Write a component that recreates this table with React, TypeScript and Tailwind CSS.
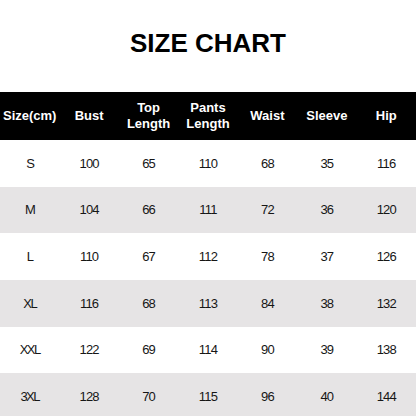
const headers = ['Size(cm)', 'Bust', 'Top\nLength', 'Pants\nLength', 'Waist', 'Sleeve', 'Hip'];

const rows = [
  ['S', '100', '65', '110', '68', '35', '116'],
  ['M', '104', '66', '111', '72', '36', '120'],
  ['L', '110', '67', '112', '78', '37', '126'],
  ['XL', '116', '68', '113', '84', '38', '132'],
  ['XXL', '122', '69', '114', '90', '39', '138'],
  ['3XL', '128', '70', '115', '96', '40', '144'],
];

export default function App() {
  return (
    <div className="w-[416px] h-[416px] overflow-hidden bg-white font-['Liberation_Sans',Arial,sans-serif]">
      <div className="h-[92px] pt-[28px]">
        <h1 className="text-center text-[26px] leading-[30px] font-bold text-black">SIZE CHART</h1>
      </div>

      <div className="grid grid-cols-7 h-[48px] bg-black text-white">
        {headers.map((h) => (
          <div
            key={h}
            className="flex items-center justify-center text-center text-[13px] leading-[16px] font-bold whitespace-pre-line"
          >
            {h}
          </div>
        ))}
      </div>

      {rows.map((row, i) => (
        <div
          key={row[0]}
          className={`grid grid-cols-7 h-[46.67px] text-[#161616] ${i % 2 === 1 ? 'bg-[#e6e4e5]' : 'bg-white'}`}
        >
          {row.map((cell, j) => (
            <div
              key={j}
              className={`flex items-center justify-center text-[13px] ${j === 0 ? 'tracking-[-1.5px]' : 'tracking-[-0.8px]'}`}
            >
              {cell}
            </div>
          ))}
        </div>
      ))}
    </div>
  );
}
